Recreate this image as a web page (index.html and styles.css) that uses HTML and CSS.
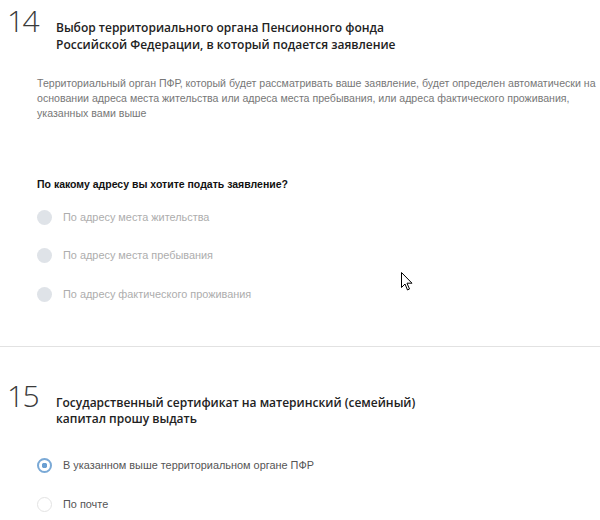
FILE: index.html
```html
<!DOCTYPE html>
<html lang="ru">
<head>
<meta charset="utf-8">
<title>Заявление</title>
<link rel="stylesheet" href="styles.css">
</head>
<body>
<section class="step step-first">
  <div class="step-head">
    <div class="step-num">14</div>
    <h2 class="step-title">Выбор территориального органа Пенсионного фонда<br>Российской Федерации, в который подается заявление</h2>
  </div>
  <p class="step-desc">Территориальный орган ПФР, который будет рассматривать ваше заявление, будет определен автоматически на основании адреса места жительства или адреса места пребывания, или адреса фактического проживания, указанных вами выше</p>
  <div class="question">По какому адресу вы хотите подать заявление?</div>
  <ul class="radios radios-disabled">
    <li class="radio"><span class="dot dot-disabled"></span><span class="label">По адресу места жительства</span></li>
    <li class="radio"><span class="dot dot-disabled"></span><span class="label">По адресу места пребывания</span></li>
    <li class="radio"><span class="dot dot-disabled"></span><span class="label">По адресу фактического проживания</span></li>
  </ul>
</section>
<hr class="divider">
<section class="step step-second">
  <div class="step-head">
    <div class="step-num">15</div>
    <h2 class="step-title">Государственный сертификат на материнский (семейный)<br>капитал прошу выдать</h2>
  </div>
  <ul class="radios radios-active">
    <li class="radio"><span class="dot dot-checked"></span><span class="label">В указанном выше территориальном органе ПФР</span></li>
    <li class="radio"><span class="dot dot-empty"></span><span class="label">По почте</span></li>
  </ul>
</section>
<svg class="cursor" width="12" height="19" viewBox="0 0 12 19"><path d="M0.5 0.5 L0.5 15.5 L4 12 L6.5 18 L8.5 17 L6 11.2 L11 11.2 Z" fill="#fff" stroke="#000" stroke-width="1"/></svg>
</body>
</html>
```
FILE: styles.css
```css
html, body {
  margin: 0;
  padding: 0;
  background: #fff;
}
body {
  width: 600px;
  height: 520px;
  overflow: hidden;
  position: relative;
  font-family: "Liberation Sans", Arial, sans-serif;
  font-size: 11px;
  color: #333;
}
.step {
  padding: 0 0 0 7px;
}
.step-first {
  padding-top: 6px;
}
.step-second {
  padding-top: 34px;
}
.step-head {
  display: flex;
  align-items: flex-start;
}
.step-num {
  font-family: "Open Sans", sans-serif;
  font-weight: 300;
  font-size: 30px;
  line-height: 30px;
  letter-spacing: -1.5px;
  color: #3a3a3a;
  width: 49px;
}
.step-title {
  margin: 0;
  padding-top: 14px;
  font-family: "Open Sans", sans-serif;
  font-weight: 600;
  font-size: 12px;
  line-height: 16.5px;
  color: #222;
}
.step-desc {
  margin: 23px 0 0 30px;
  padding-right: 0;
  font-size: 10.6px;
  line-height: 15px;
  color: #777;
}
.question {
  margin: 56px 0 0 30px;
  font-weight: bold;
  font-size: 10.5px;
  line-height: 15px;
  color: #111;
}
.radios {
  list-style: none;
  margin: 0;
  padding: 0 0 0 30px;
}
.radios-disabled {
  margin-top: 6px;
}
.radios-active {
  margin-top: 19px;
}
.radio {
  display: flex;
  align-items: center;
  height: 38.5px;
}
.dot {
  box-sizing: border-box;
  width: 15px;
  height: 15px;
  border-radius: 50%;
  margin-right: 11px;
  flex: none;
}
.dot-disabled {
  background: #dfe3e8;
}
.dot-checked {
  border: 2px solid #7aa9d6;
  background: radial-gradient(circle, #6a9fd2 0 2.6px, #fff 3px);
}
.dot-empty {
  border: 1px solid #e3e3e3;
  background: #fff;
}
.label {
  font-size: 10.9px;
  line-height: 15px;
}
.radios-disabled .label {
  color: #adadad;
}
.radios-active .label {
  color: #555;
}
.divider {
  margin: 32px 0 0;
  border: 0;
  border-top: 1px solid #e2e2e2;
  height: 0;
}
.cursor {
  position: absolute;
  left: 401px;
  top: 272px;
}
```
